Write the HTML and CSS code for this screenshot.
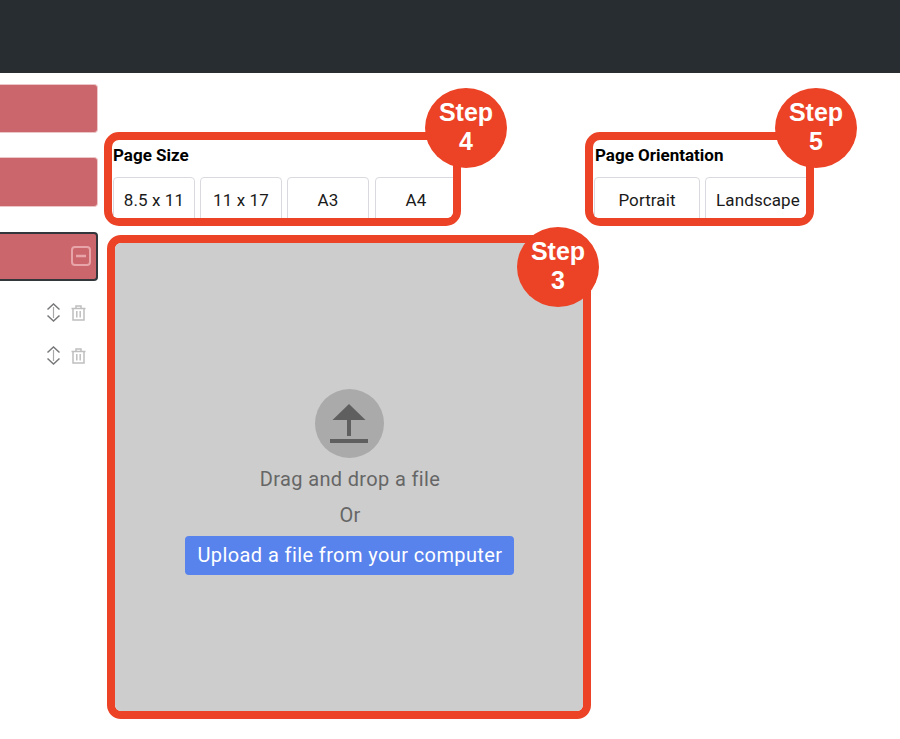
FILE: index.html
```html
<!DOCTYPE html>
<html lang="en">
<head>
<meta charset="utf-8">
<title>Upload</title>
<link rel="stylesheet" href="styles.css">
</head>
<body>
<header class="topbar"></header>
<div class="content">
  <aside class="sidebar">
    <div class="card"></div>
    <div class="card"></div>
    <div class="card card-active">
      <svg class="minus" width="20" height="20" viewBox="0 0 20 20" fill="none" stroke="#e8a5a9" stroke-width="2"><rect x="1" y="1" width="18" height="18" rx="3"/><path d="M5 10h10" stroke-width="2.500"/></svg>
    </div>
    <div class="row">
      <svg width="15" height="19" viewBox="0 0 15 19" fill="none" stroke="#77787a" stroke-width="1.500"><path d="M7.500 4v11" stroke="#a8a8a8" stroke-width="1.200"/><path d="M1.500 6.500 7.500 1l6 5.500M1.500 12.500l6 5.500 6-5.500"/></svg>
      <svg width="15" height="16" viewBox="0 0 15 16" fill="none" stroke="#bfbfbf" stroke-width="1.500"><path d="M.5 3.500h14M5 3.500V1h5v2.500M2 3.500V15h11V3.500M5.800 6v6.500M9.200 6v6.500"/></svg>
    </div>
    <div class="row">
      <svg width="15" height="19" viewBox="0 0 15 19" fill="none" stroke="#77787a" stroke-width="1.500"><path d="M7.500 4v11" stroke="#a8a8a8" stroke-width="1.200"/><path d="M1.500 6.500 7.500 1l6 5.500M1.500 12.500l6 5.500 6-5.500"/></svg>
      <svg width="15" height="16" viewBox="0 0 15 16" fill="none" stroke="#bfbfbf" stroke-width="1.500"><path d="M.5 3.500h14M5 3.500V1h5v2.500M2 3.500V15h11V3.500M5.800 6v6.500M9.200 6v6.500"/></svg>
    </div>
  </aside>
  <main class="main">
    <div class="options">
      <section class="frame frame-size">
        <div class="clip">
          <h2 class="label">Page Size</h2>
          <div class="choices">
            <button class="choice choice-size">8.5 x 11</button>
            <button class="choice choice-size">11 x 17</button>
            <button class="choice choice-size">A3</button>
            <button class="choice choice-size">A4</button>
          </div>
        </div>
        <div class="badge badge-size">Step<br>4</div>
      </section>
      <section class="frame frame-orient">
        <div class="clip">
          <h2 class="label">Page Orientation</h2>
          <div class="choices">
            <button class="choice choice-orient">Portrait</button>
            <button class="choice choice-orient">Landscape</button>
          </div>
        </div>
        <div class="badge badge-orient">Step<br>5</div>
      </section>
    </div>
    <section class="frame frame-upload">
      <div class="drop">
        <div class="drop-icon">
          <svg width="38" height="39" viewBox="0 0 38 39" fill="#5f5f5f"><path d="M19 0 35.500 16H21V32H17V16H2.500Z"/><rect y="35" width="38" height="4"/></svg>
        </div>
        <p class="drop-text">Drag and drop a file</p>
        <p class="drop-or">Or</p>
        <button class="upload-btn">Upload a file from your computer</button>
      </div>
      <div class="badge badge-upload">Step<br>3</div>
    </section>
  </main>
</div>
</body>
</html>
```
FILE: styles.css
```css
* { box-sizing: border-box; }
html, body { margin: 0; padding: 0; }
body {
  height: 739px;
  overflow: hidden;
  background: #fff;
  font-family: Roboto, "Liberation Sans", sans-serif;
}
.topbar { height: 73px; background: #282d31; }
.content { display: flex; }

.sidebar {
  width: 98px;
  flex: none;
  padding-top: 11px;
  display: flex;
  flex-direction: column;
}
.card {
  height: 49px;
  margin-bottom: 24px;
  background: #cb666c;
  border: 1px solid #ecc6c8;
  border-left: 0;
  border-radius: 0 4px 4px 0;
}
.card + .card { height: 50px; margin-bottom: 25px; }
.card.card-active {
  height: 49px;
  margin-bottom: 0;
  border: 2px solid #33363b;
  border-left: 0;
  display: flex;
  align-items: center;
  justify-content: flex-end;
  padding: 0 5px 2px 0;
}
.row {
  display: flex;
  align-items: center;
  justify-content: flex-end;
  gap: 10px;
  padding-right: 12px;
  height: 19px;
  margin-top: 22px;
}
.row + .row { margin-top: 24px; }

.main { flex: 1; padding: 59px 0 0 6px; }
.options { display: flex; gap: 124px; }

.frame {
  position: relative;
  border: 8px solid #ec4225;
  border-radius: 15px;
}
.frame-size { width: 357px; height: 94px; }
.frame-orient { width: 229px; height: 94px; }
.frame-upload {
  width: 484px;
  height: 484px;
  margin: 9px 0 0 3px;
  border-radius: 14px;
}
.clip {
  height: 100%;
  overflow: hidden;
  padding-left: 1px;
  border-radius: 6px;
}
.label {
  margin: 5px 0 0;
  font-size: 17px;
  line-height: 20px;
  font-weight: 700;
  color: #000;
}
.frame-orient .label { padding-left: 1px; }
.choices { display: flex; gap: 5px; margin-top: 12px; }
.choice {
  flex: none;
  height: 60px;
  padding: 0 0 14px;
  background: #fff;
  border: 1px solid #d9d9df;
  border-radius: 4px;
  font: 400 17px/22px Roboto, "Liberation Sans", sans-serif;
  letter-spacing: 0.1px;
  color: #1a1a1a;
}
.choice-size { width: 82px; }
.choice-size:last-child { margin-left: 1px; }
.choice-orient { width: 106px; }

.badge {
  position: absolute;
  width: 82px;
  height: 80px;
  padding-top: 10px;
  border-radius: 50%;
  background: #ec4225;
  color: #fff;
  font: 700 25px/29px "Liberation Sans", Arial, sans-serif;
  text-align: center;
}
.badge-size { top: -52px; right: -54px; }
.badge-orient { top: -52px; right: -51px; }
.badge-upload { top: -16px; right: -16px; }

.drop {
  height: 100%;
  padding-top: 146px;
  background: #cdcdcd;
  border-radius: 6px;
  display: flex;
  flex-direction: column;
  align-items: center;
}
.drop-icon {
  width: 69px;
  height: 69px;
  border-radius: 50%;
  background: #aaaaaa;
  display: flex;
  align-items: center;
  justify-content: center;
}
.drop-text, .drop-or {
  margin: 0;
  padding-left: 2px;
  font-size: 20px;
  line-height: 24px;
  letter-spacing: 0.35px;
  color: #666;
}
.drop-text { margin-top: 9px; }
.drop-or { margin-top: 12px; }
.upload-btn {
  margin-top: 9px;
  width: 329px;
  height: 39px;
  padding: 0 0 0 2px;
  border: 0;
  border-radius: 4px;
  background: #5882ec;
  color: #fff;
  font: 400 20px/39px Roboto, "Liberation Sans", sans-serif;
  letter-spacing: 0.4px;
}
```
